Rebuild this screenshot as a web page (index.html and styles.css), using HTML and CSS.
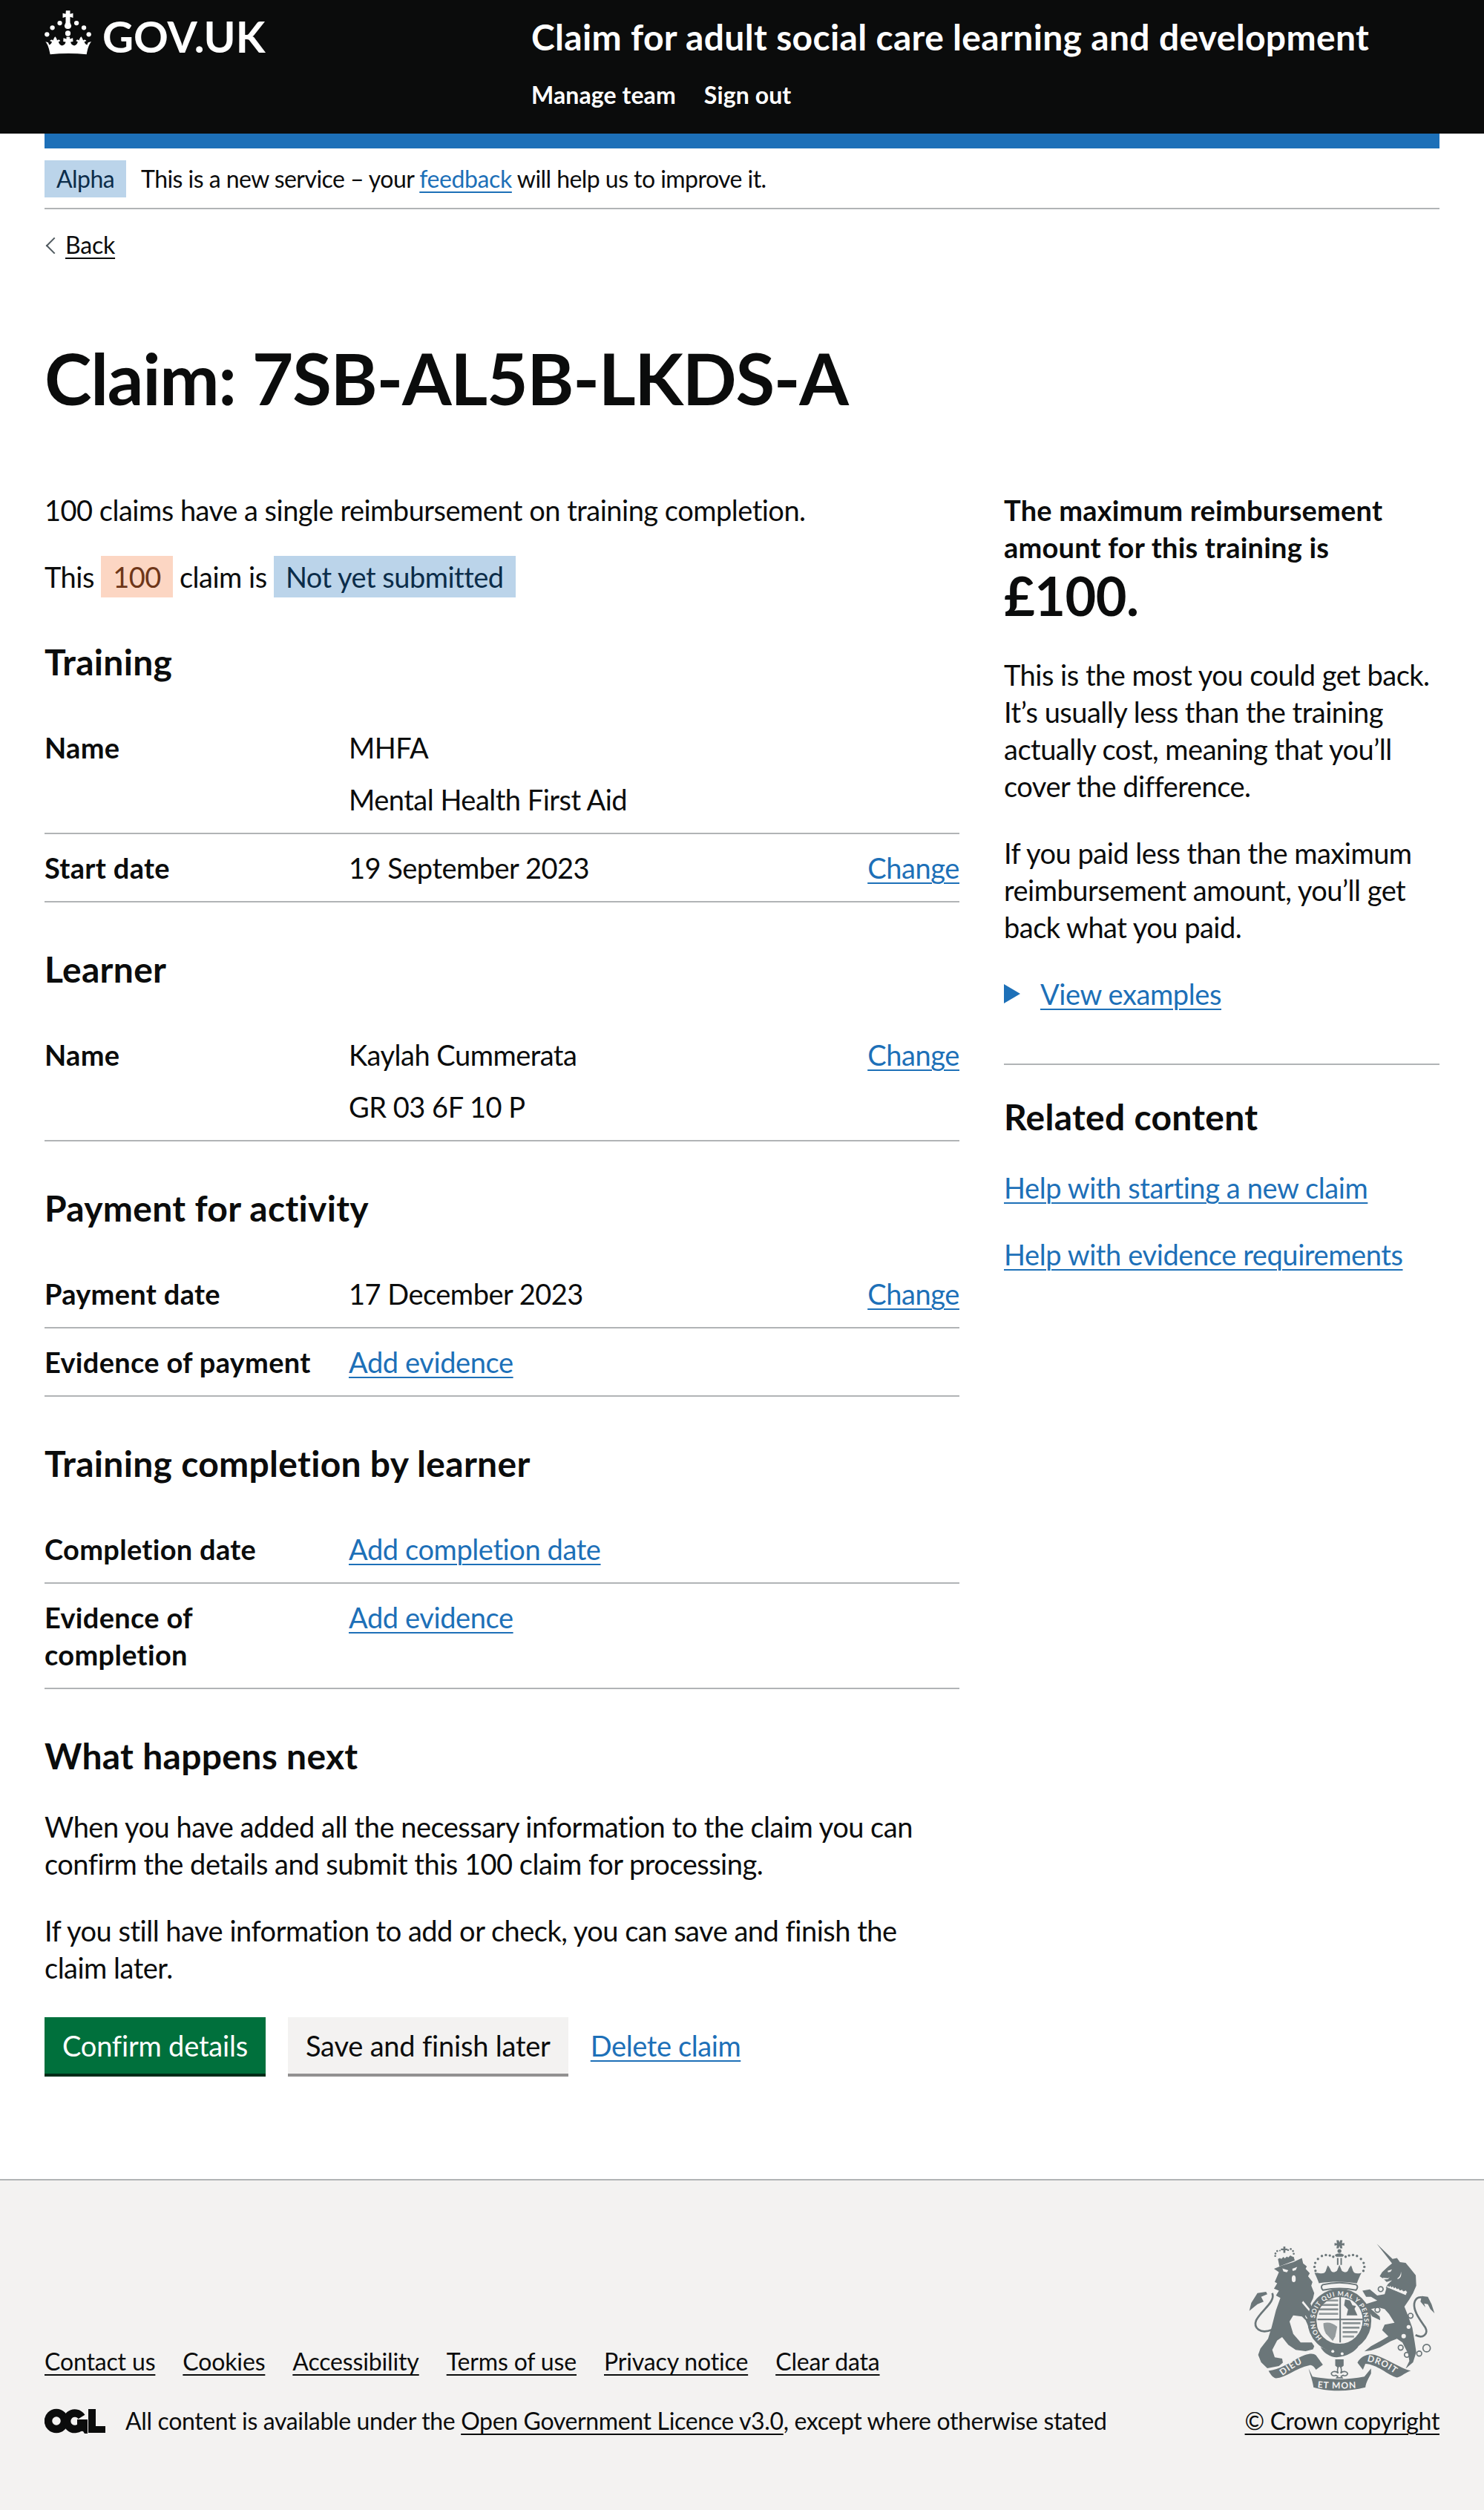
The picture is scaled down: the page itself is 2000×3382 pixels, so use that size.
FILE: index.html
```html
<!DOCTYPE html>
<html lang="en">
<head>
  <meta charset="UTF-8">
  <title>Claim: 7SB-AL5B-LKDS-A - Claim for adult social care learning and development</title>
  <meta name="viewport" content="width=device-width, initial-scale=1.0" />
  <link rel="stylesheet" href="styles.css">
</head>
<body>

  <header class="header">
    <a class="logo" href="#">
      <svg class="crown" viewBox="30 27 190 180" aria-hidden="true">
        <path d="M117 27h17v14l12-3v19l-12-4v23l5 12c0 9-6 14-14 14s-14-5-14-14l5-12V53l-12 4V38l12 3z"/>
        <circle cx="92" cy="78" r="9.5"/><circle cx="160" cy="78" r="9.5"/>
        <circle cx="62" cy="97" r="9.5"/><circle cx="190" cy="97" r="9.5"/>
        <circle cx="40" cy="124" r="9.5"/><circle cx="210" cy="124" r="9.5"/>
        <circle cx="125" cy="120" r="11"/>
        <path d="M32 153l13 4 4 10c7-3 10-7 11-13l-8-3c2-6 9-8 13-2 1-5 4-11 8-16 5 5 8 11 8 16 5-5 11-4 13 2l-7 3c1 8 6 13 14 16 9-2 14-7 15-15l-10-2 1-14 12 4v-9h14v9l12-4 1 14-10 2c1 8 6 13 15 15 8-3 13-8 14-16l-7-3c2-6 8-7 13-2 0-5 3-11 8-16 4 5 7 11 8 16 4-6 11-4 13 2l-8 3c1 6 4 10 11 13l4-10 13-4c-10 13-15 29-19 52-48-5-100-5-148 0-4-23-9-39-19-52z"/>
      </svg>
      <span class="logo-text">GOV.UK</span>
    </a>
    <div class="service">
      <a class="service-name" href="#">Claim for adult social care learning and development</a>
      <nav class="service-nav">
        <a href="#">Manage team</a>
        <a href="#">Sign out</a>
      </nav>
    </div>
  </header>

  <div class="page-width">
    <div class="blue-bar"></div>

    <div class="phase-banner">
      <strong class="tag tag-blue">Alpha</strong>
      <span>This is a new service – your <a class="link" href="#">feedback</a> will help us to improve it.</span>
    </div>

    <a class="back-link" href="#">Back</a>

    <h1 class="heading-xl">Claim: 7SB-AL5B-LKDS-A</h1>

    <div class="columns">
      <main class="col-main">
        <p class="body">100 claims have a single reimbursement on training completion.</p>
        <p class="body">This <strong class="tag tag-orange">100</strong> claim is <strong class="tag tag-blue">Not yet submitted</strong></p>

        <h2 class="heading-m">Training</h2>
        <dl class="summary">
          <div class="summary-row">
            <dt>Name</dt>
            <dd><p>MHFA</p><p>Mental Health First Aid</p></dd>
            <dd></dd>
          </div>
          <div class="summary-row">
            <dt>Start date</dt>
            <dd>19 September 2023</dd>
            <dd><a class="link" href="#">Change</a></dd>
          </div>
        </dl>

        <h2 class="heading-m">Learner</h2>
        <dl class="summary">
          <div class="summary-row">
            <dt>Name</dt>
            <dd><p>Kaylah Cummerata</p><p>GR 03 6F 10 P</p></dd>
            <dd><a class="link" href="#">Change</a></dd>
          </div>
        </dl>

        <h2 class="heading-m">Payment for activity</h2>
        <dl class="summary">
          <div class="summary-row">
            <dt>Payment date</dt>
            <dd>17 December 2023</dd>
            <dd><a class="link" href="#">Change</a></dd>
          </div>
          <div class="summary-row">
            <dt>Evidence of payment</dt>
            <dd><a class="link" href="#">Add evidence</a></dd>
            <dd></dd>
          </div>
        </dl>

        <h2 class="heading-m">Training completion by learner</h2>
        <dl class="summary">
          <div class="summary-row">
            <dt>Completion date</dt>
            <dd><a class="link" href="#">Add completion date</a></dd>
            <dd></dd>
          </div>
          <div class="summary-row">
            <dt>Evidence of completion</dt>
            <dd><a class="link" href="#">Add evidence</a></dd>
            <dd></dd>
          </div>
        </dl>

        <h2 class="heading-m">What happens next</h2>
        <p class="body">When you have added all the necessary information to the claim you can confirm the details and submit this 100 claim for processing.</p>
        <p class="body">If you still have information to add or check, you can save and finish the claim later.</p>

        <div class="button-group">
          <a class="button button-green" href="#">Confirm details</a>
          <a class="button button-grey" href="#">Save and finish later</a>
          <a class="link" href="#">Delete claim</a>
        </div>
      </main>

      <aside class="col-side">
        <p class="max-label">The maximum reimbursement amount for this training is</p>
        <p class="max-amount">£100.</p>
        <p class="body">This is the most you could get back. It’s usually less than the training actually cost, meaning that you’ll cover the difference.</p>
        <p class="body">If you paid less than the maximum reimbursement amount, you’ll get back what you paid.</p>
        <div class="details">
          <span class="details-arrow"></span>
          <a class="link" href="#">View examples</a>
        </div>
        <hr class="rule">
        <h2 class="heading-m">Related content</h2>
        <p class="body"><a class="link" href="#">Help with starting a new claim</a></p>
        <p class="body"><a class="link" href="#">Help with evidence requirements</a></p>
      </aside>
    </div>
  </div>

  <footer class="footer">
    <div class="footer-left">
      <ul class="footer-links">
        <li><a href="#">Contact us</a></li>
        <li><a href="#">Cookies</a></li>
        <li><a href="#">Accessibility</a></li>
        <li><a href="#">Terms of use</a></li>
        <li><a href="#">Privacy notice</a></li>
        <li><a href="#">Clear data</a></li>
      </ul>
      <div class="licence">
        <svg class="ogl" viewBox="0 0 82 34" aria-hidden="true">
          <circle cx="16" cy="17" r="11" fill="none" stroke="#0b0c0c" stroke-width="10.5"/>
          <path d="M50 11.5A10.8 10.8 0 1 0 50 23" fill="none" stroke="#0b0c0c" stroke-width="10.5"/>
          <path d="M44 15h14v19h-4l-2-3-8-1zM59 1h10v23h13v9H59z" fill="#0b0c0c"/>
        </svg>
        <span>All content is available under the <a href="#">Open Government Licence v3.0</a>, except where otherwise stated</span>
      </div>
    </div>
    <div class="footer-right">
      <svg class="crest" viewBox="250 115 754 612" aria-hidden="true">
        <defs>
          <path id="garter-arc" d="M546 512A100 100 0 1 1 688 512"/>
          <path id="ribbon-left" d="M386 664C420 640 455 612 498 606"/>
          <path id="ribbon-mid" d="M528 712C580 718 650 718 708 712"/>
          <path id="ribbon-right" d="M728 606C775 614 825 640 858 672"/>
        </defs>

        <!-- crown -->
        <g class="crest-ink">
          <path d="M605 116h9l3 10 3-10h9l-2 13 10-2v11l-10-2 2 13h-9l-3-10-3 10h-9l2-13-10 2v-11l10 2z"/>
          <circle cx="617" cy="160" r="8"/>
          <path d="M598 176c12-9 26-9 38 0l-6 7h-26z"/>
          <rect x="607" y="188" width="6" height="28"/><rect x="621" y="188" width="6" height="28"/>
          <path d="M528 248c20 6 30 2 34-8 2-8 6-18 8-22 5 5 10 14 13 22 4 6 14 8 24 0l10-24 10 24c10 8 20 6 24 0 3-8 8-17 13-22 2 4 6 14 8 22 4 10 14 14 34 8-8 16-14 30-18 42-48-8-106-8-154 0-4-12-10-26-18-42z"/>
          <circle cx="520" cy="240" r="5"/><circle cx="516" cy="224" r="5"/><circle cx="519" cy="208" r="5"/><circle cx="530" cy="192" r="5"/><circle cx="546" cy="180" r="5"/><circle cx="562" cy="176" r="5"/><circle cx="578" cy="178" r="5"/><circle cx="592" cy="183" r="5"/>
          <circle cx="714" cy="240" r="5"/><circle cx="718" cy="224" r="5"/><circle cx="715" cy="208" r="5"/><circle cx="704" cy="192" r="5"/><circle cx="688" cy="180" r="5"/><circle cx="672" cy="176" r="5"/><circle cx="656" cy="178" r="5"/><circle cx="642" cy="183" r="5"/>
        </g>
        <path class="crest-band" d="M550 296c44-10 90-10 134 0 8 4 8 14 0 22-44-9-90-9-134 0-8-8-8-18 0-22z"/>

        <!-- lion -->
        <g class="crest-ink">
          <path d="M352 232L385 218 430 205 465 188 470 210 485 222 480 232 497 250 490 262 508 285 503 300 515 330 510 352 500 372 522 440 527 462 515 475 492 467 480 440 465 425 430 420 415 445 430 495 460 530 505 530 515 545 510 558 480 565 440 560 410 540 385 508 365 522 345 560 355 590 385 595 388 612 372 625 325 634 300 610 288 580 297 555 328 515 342 470 360 400 378 350 360 340 372 320 352 312 365 290 355 285 365 262 372 245z"/>
          <path d="M320 325L285 330 260 370 252 402 285 375 310 365 300 345 325 335z"/>
          <path d="M380 150h10v-8h8v8h8v7h-8v10h-8v-10h-10z"/>
          <path d="M368 192l8-4 6 4 8-8 6 6 8-8 6 4 8-8 8 4 6 2 4 14-62 24z"/>
          <circle cx="357" cy="180" r="4"/><circle cx="358" cy="170" r="4"/><circle cx="365" cy="160" r="4"/><circle cx="376" cy="158" r="3"/>
          <circle cx="409" cy="156" r="4"/><circle cx="420" cy="152" r="4"/><circle cx="429" cy="160" r="4"/><circle cx="432" cy="171" r="4"/>
        </g>
        <path class="crest-tail" d="M345 330C360 365 300 400 280 440 268 470 295 498 345 478"/>
        <g class="crest-cut">
          <path d="M386 230l24 8-6 8-14-4zM426 232l20-8-6 13-12 4z"/>
          <ellipse cx="432" cy="272" rx="8" ry="14"/>
          <path d="M470 362l46 56-5 5-46-54z"/>
          <path d="M480 420l8 14 6-8 4 12 8-4 2 14-10-4-6-10-10-2-4-10z"/>
        </g>

        <!-- unicorn -->
        <g class="crest-ink">
          <path d="M768 130L832 192 850 188 862 205 885 208 905 232 926 258 928 300 915 330 900 356 880 385 890 410 912 470 922 530 928 570 915 610 885 636 900 605 895 575 872 530 850 515 825 525 780 550 745 562 718 566 745 545 790 520 815 505 790 480 800 458 840 450 818 415 800 395 775 388 745 395 780 425 782 440 750 425 730 395 722 375 770 360 745 345 725 345 710 320 740 315 770 340 800 335 812 295 830 278 808 285 795 272 780 262 790 245 815 222 830 210z"/>
          <path d="M950 342L975 345 990 375 1002 412 985 395 975 375 960 372 965 388 945 365z"/>
        </g>
        <path class="crest-tail" d="M925 500C955 516 978 495 965 470 945 440 916 405 920 372 925 346 945 342 965 352"/>
        <g class="crest-cut">
          <path d="M812 240l18-6-6 10-10 2z"/>
          <path d="M792 268l22 2 6-5-6 9-18 1z"/>
          <path d="M852 270c10-6 14-16 14-26 4 14-2 28-14 30z"/>
        </g>
        <path class="crest-collar" d="M806 310l6-12 6 6 6-5 4 7 6-5 4 8 6-4 6 8 6-3 6 8 8-3 6 7 10-4 6 8-6 14-76-32z"/>
        <g class="crest-ring">
          <circle cx="784" cy="314" r="10"/><circle cx="771" cy="398" r="10"/><circle cx="905" cy="422" r="10"/>
          <circle cx="865" cy="551" r="10"/><circle cx="890" cy="580" r="10"/><circle cx="940" cy="575" r="10"/><circle cx="970" cy="553" r="15"/>
        </g>
        <circle class="crest-hole" cx="897" cy="467" r="8"/><circle class="crest-hole" cx="877" cy="504" r="9"/>

        <!-- shield and garter -->
        <circle class="crest-garter" cx="617" cy="442" r="111"/>
        <circle class="crest-shield" cx="619" cy="438" r="92"/>
        <path class="crest-line" d="M620 346v184M528 437h184"/>
        <g class="crest-ink">
          <rect x="552" y="356" width="60" height="8" opacity=".7"/><rect x="538" y="374" width="74" height="8" opacity=".8"/><rect x="534" y="392" width="78" height="8" opacity=".8"/><rect x="534" y="410" width="78" height="8" opacity=".7"/>
          <path d="M640 356l20 4 10 20 14 2-6 12 12 26h-44l6-24-16-16z"/>
          <rect x="630" y="448" width="72" height="8" opacity=".8"/><rect x="630" y="466" width="68" height="8" opacity=".8"/><rect x="630" y="484" width="60" height="8" opacity=".8"/><rect x="630" y="502" width="46" height="8" opacity=".7"/>
          <path d="M552 452c20-6 40 0 56 14l-8 40-10 18-28-30c-8-14-10-28-10-42z" opacity=".7"/>
          <path d="M540 548c24 10 36 18 62 18l12-20 8 0 10 18 44-16 18-2c-14 20-46 42-88 44-28 0-50-18-60-32z"/>
        </g>
        <circle class="crest-hole" cx="590" cy="566" r="6"/><circle class="crest-hole" cx="628" cy="576" r="6"/>
        <text class="crest-text"><textPath href="#garter-arc">HONI SOIT QUI MAL Y PENSE</textPath></text>

        <!-- motto ribbon -->
        <g class="crest-ink">
          <path d="M330 645C372 640 420 612 448 594 475 578 510 568 522 582L550 620 522 640C515 628 506 620 496 622 440 634 400 672 360 675 345 672 338 658 330 645z"/>
          <path d="M492 635L508 668C580 682 650 682 718 668L745 635 745 655C735 675 725 690 722 712 650 730 580 730 512 712 510 690 500 665 492 635z"/>
          <path d="M690 612C700 590 730 572 760 580 810 596 860 632 906 645 885 650 870 668 850 672 810 660 770 618 722 616L712 640z"/>
          <path d="M600 598h34v26l-17 14-17-14z"/>
        </g>
        <text class="crest-text crest-text-big"><textPath href="#ribbon-left">DIEU</textPath></text>
        <text class="crest-text crest-text-big"><textPath href="#ribbon-mid">ET MON</textPath></text>
        <text class="crest-text crest-text-big"><textPath href="#ribbon-right">DROIT</textPath></text>
        <path class="crest-fleur" d="M617 622c10 12 10 22 5 32 10-10 24-8 28 1 0 8-10 13-18 8l-8 4 4 6h-22l4-6-8-4c-8 5-18 0-18-8 4-9 18-11 28-1-5-10-5-20 5-32z"/>
      </svg>
      <a class="copyright" href="#">© Crown copyright</a>
    </div>
  </footer>

</body>
</html>
```

FILE: styles.css
```css
* {
  box-sizing: border-box;
}
body {
  margin: 0;
  background: white;
  color: #0b0c0c;
  font-family: Lato, "Noto Sans", sans-serif;
  font-size: 38px;
  line-height: 50px;
  letter-spacing: -0.5px;
}
p {
  margin: 0;
}
.header {
  display: flex;
  background: #0b0c0c;
  height: 180px;
  padding: 0 60px;
  color: white;
}
.logo {
  display: flex;
  align-items: center;
  gap: 15px;
  width: 656px;
  height: 88px;
  color: white;
  text-decoration: none;
}
.crown {
  width: 63px;
  height: 60px;
  fill: white;
}
.logo-text {
  margin-top: 10px;
  font-size: 58px;
  font-weight: 700;
  line-height: 60px;
  letter-spacing: 0;
}
.service-name {
  display: block;
  margin-top: 20px;
  color: white;
  font-size: 48px;
  font-weight: 700;
  line-height: 60px;
  letter-spacing: 0.33px;
  text-decoration: none;
}
.service-nav {
  display: flex;
  gap: 38px;
  margin-top: 28px;
  font-size: 32px;
  font-weight: 700;
  line-height: 40px;
  letter-spacing: 0.1px;
}
.service-nav a {
  color: white;
  text-decoration: none;
}
.page-width {
  margin: 0 60px;
}
.blue-bar {
  height: 20px;
  background: #1d70b8;
}
.phase-banner {
  display: flex;
  align-items: center;
  gap: 20px;
  padding: 16px 0 14px;
  border-bottom: 2px solid #b1b4b6;
  font-size: 32px;
  line-height: 50px;
  letter-spacing: -0.55px;
}
.tag {
  padding: 5px 16px;
  font-weight: 400;
}
.tag-blue {
  background: #bbd4ea;
  color: #0c2d4a;
}
.tag-orange {
  background: #fcd6c3;
  color: #6e3619;
}
.phase-banner .tag {
  padding: 0 16px;
}
.link {
  color: #1d70b8;
  letter-spacing: -0.4px;
  text-decoration-thickness: 2px;
  text-underline-offset: 5px;
}
.back-link {
  display: block;
  position: relative;
  width: fit-content;
  margin-top: 28px;
  padding-left: 28px;
  color: #0b0c0c;
  font-size: 32px;
  line-height: 40px;
  letter-spacing: -0.2px;
  text-decoration-thickness: 2px;
  text-underline-offset: 5px;
}
.back-link::before {
  content: "";
  position: absolute;
  left: 5px;
  top: 13px;
  width: 14px;
  height: 14px;
  border-left: 2px solid #505a5f;
  border-bottom: 2px solid #505a5f;
  transform: rotate(45deg);
}
.heading-xl {
  margin: 109px 0 103px;
  font-size: 96px;
  font-weight: 700;
  line-height: 100px;
  letter-spacing: -1.3px;
}
.columns {
  display: grid;
  grid-template-columns: 1233px 587px;
  gap: 60px;
}
.body {
  margin-bottom: 40px;
}
.heading-m {
  margin: 60px 0 40px;
  font-size: 48px;
  font-weight: 700;
  line-height: 60px;
  letter-spacing: 0.3px;
}
.summary {
  margin: 0 0 60px;
}
.summary-row {
  display: grid;
  grid-template-columns: 410px 1fr auto;
  padding: 20px 0;
  border-bottom: 2px solid #b1b4b6;
}
.summary dt {
  width: 370px;
  font-weight: 700;
  letter-spacing: 0.3px;
}
.summary dd {
  margin: 0;
}
.summary dd p + p {
  margin-top: 20px;
}
.button-group {
  display: flex;
  align-items: center;
  gap: 30px;
  height: 80px;
  margin-bottom: 140px;
  letter-spacing: -0.2px;
}
.button {
  padding: 13px 24px;
  text-decoration: none;
}
.button-green {
  background: #00703c;
  box-shadow: 0 4px 0 #002d18;
  color: white;
}
.button-grey {
  background: #f3f2f1;
  box-shadow: 0 4px 0 #929191;
  color: #0b0c0c;
}
.max-label {
  font-weight: 700;
  letter-spacing: 0.2px;
}
.max-amount {
  margin-bottom: 42px;
  font-size: 72px;
  font-weight: 700;
  line-height: 80px;
  letter-spacing: -0.5px;
}
.details {
  display: flex;
  align-items: center;
  gap: 27px;
}
.details-arrow {
  width: 0;
  height: 0;
  border-left: 22px solid #1d70b8;
  border-top: 13px solid transparent;
  border-bottom: 13px solid transparent;
}
.rule {
  height: 2px;
  margin: 69px 0 40px;
  border: 0;
  background: #b1b4b6;
}
.rule + .heading-m {
  margin-top: 0;
}
.footer {
  display: flex;
  justify-content: space-between;
  align-items: flex-end;
  height: 446px;
  padding: 0 60px 100px;
  border-top: 2px solid #b1b4b6;
  background: #f3f2f1;
  font-size: 32px;
  line-height: 40px;
  letter-spacing: -0.35px;
}
.footer a {
  color: #0b0c0c;
  text-decoration-thickness: 2px;
  text-underline-offset: 5px;
}
.footer-links {
  display: flex;
  gap: 37px;
  margin: 0 0 40px;
  padding: 0;
  list-style: none;
  letter-spacing: -0.15px;
}
.licence {
  display: flex;
  align-items: center;
  gap: 27px;
}
.ogl {
  width: 82px;
  height: 34px;
}
.footer-right {
  display: flex;
  flex-direction: column;
  align-items: flex-end;
  gap: 20px;
}
.crest {
  width: 251px;
  height: 204px;
  margin-right: 6px;
}
.crest-ink {
  fill: #6b7679;
}
.crest-cut {
  fill: #f3f2f1;
}
.crest-band {
  fill: #f3f2f1;
  stroke: #6b7679;
  stroke-width: 6px;
}
.crest-collar {
  fill: #f3f2f1;
  stroke: #6b7679;
  stroke-width: 3px;
}
.crest-tail {
  fill: none;
  stroke: #6b7679;
  stroke-width: 8px;
}
.crest-ring {
  fill: none;
  stroke: #6b7679;
  stroke-width: 5px;
}
.crest-hole {
  fill: #f3f2f1;
}
.crest-garter {
  fill: none;
  stroke: #6b7679;
  stroke-width: 36px;
}
.crest-shield {
  fill: #f3f2f1;
}
.crest-line {
  fill: none;
  stroke: #6b7679;
  stroke-width: 6px;
}
.crest-text {
  fill: #f3f2f1;
  font-family: Lato, sans-serif;
  font-size: 26px;
  font-weight: 700;
  letter-spacing: 2.4px;
}
.crest-text-big {
  font-size: 36px;
  letter-spacing: 3px;
}
.crest-fleur {
  fill: #f3f2f1;
  stroke: #6b7679;
  stroke-width: 5px;
}
```
